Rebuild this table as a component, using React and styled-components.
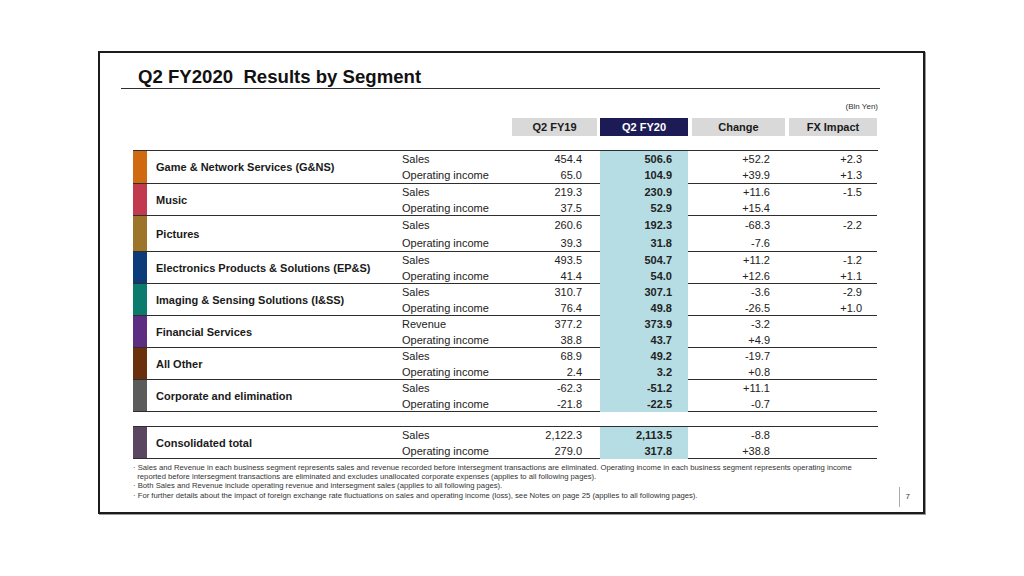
import React from "react";
import styled, { createGlobalStyle } from "styled-components";

const GlobalStyle = createGlobalStyle`
  html, body {
    margin: 0;
    padding: 0;
    background: #fff;
  }
  body {
    font-family: "Liberation Sans", Arial, sans-serif;
    color: #1a1a1a;
  }
`;

const COLS = "14px 255px 110px 88px 88px 97px 92px";
const LINE = "#2e2e2e";
const BLUE = "#b6dde3";

const segments = [
  {
    name: "Game & Network Services (G&NS)",
    color: "#cf6a10",
    rowH: 16.5,
    rows: [
      ["Sales", "454.4", "506.6", "+52.2", "+2.3"],
      ["Operating income", "65.0", "104.9", "+39.9", "+1.3"],
    ],
  },
  {
    name: "Music",
    color: "#c13a4e",
    rowH: 16,
    rows: [
      ["Sales", "219.3", "230.9", "+11.6", "-1.5"],
      ["Operating income", "37.5", "52.9", "+15.4", ""],
    ],
  },
  {
    name: "Pictures",
    color: "#9c742a",
    rowH: 18,
    rows: [
      ["Sales", "260.6", "192.3", "-68.3", "-2.2"],
      ["Operating income", "39.3", "31.8", "-7.6", ""],
    ],
  },
  {
    name: "Electronics Products & Solutions (EP&S)",
    color: "#0b3b78",
    rowH: 16,
    rows: [
      ["Sales", "493.5", "504.7", "+11.2", "-1.2"],
      ["Operating income", "41.4", "54.0", "+12.6", "+1.1"],
    ],
  },
  {
    name: "Imaging & Sensing Solutions (I&SS)",
    color: "#0b7b6d",
    rowH: 16,
    rows: [
      ["Sales", "310.7", "307.1", "-3.6", "-2.9"],
      ["Operating income", "76.4", "49.8", "-26.5", "+1.0"],
    ],
  },
  {
    name: "Financial Services",
    color: "#5d2d83",
    rowH: 16,
    rows: [
      ["Revenue", "377.2", "373.9", "-3.2", ""],
      ["Operating income", "38.8", "43.7", "+4.9", ""],
    ],
  },
  {
    name: "All Other",
    color: "#6a300c",
    rowH: 16,
    rows: [
      ["Sales", "68.9", "49.2", "-19.7", ""],
      ["Operating income", "2.4", "3.2", "+0.8", ""],
    ],
  },
  {
    name: "Corporate and elimination",
    color: "#5b5b5b",
    rowH: 16,
    rows: [
      ["Sales", "-62.3", "-51.2", "+11.1", ""],
      ["Operating income", "-21.8", "-22.5", "-0.7", ""],
    ],
  },
];

const total = {
  name: "Consolidated total",
  color: "#5a4660",
  rowH: 16,
  rows: [
    ["Sales", "2,122.3", "2,113.5", "-8.8", ""],
    ["Operating income", "279.0", "317.8", "+38.8", ""],
  ],
};

const Page = styled.div`
  padding: 51px 0 0 98px;
  height: 576px;
  box-sizing: border-box;
`;

const Frame = styled.div`
  width: 827px;
  height: 463px;
  box-sizing: border-box;
  border: 2px solid #1c1c1c;
  box-shadow: 1px 1px 0 #9a9a9a;
  display: flex;
  flex-direction: column;
`;

const TitleBar = styled.div`
  margin: 13px 0 0 21px;
  width: 759px;
  padding-left: 17px;
  box-sizing: border-box;
  border-bottom: 1.5px solid ${LINE};
  font-size: 18.6px;
  line-height: 22px;
  font-weight: bold;
  color: #111;
  white-space: pre;
`;

const Body = styled.div`
  margin-left: 33px;
  width: 745px;
`;

const Unit = styled.div`
  margin-top: 13px;
  text-align: right;
  font-size: 8px;
  line-height: 10px;
  color: #333;
`;

const HeaderRow = styled.div`
  margin-top: 6px;
  display: grid;
  grid-template-columns: ${COLS};
  height: 18px;
`;

const HeadCell = styled.div`
  grid-column: ${(p) => p.$col};
  margin: ${(p) => p.$margin};
  background: ${(p) => (p.$dark ? "#1d1b55" : "#d9d9d9")};
  color: ${(p) => (p.$dark ? "#fff" : "#1a1a1a")};
  font-size: 11px;
  font-weight: bold;
  display: flex;
  align-items: center;
  justify-content: center;
`;

const TopRule = styled.div`
  margin-top: 14px;
  border-top: 1.5px solid ${LINE};
`;

const Segment = styled.div`
  display: grid;
  grid-template-columns: ${COLS};
  grid-template-rows: repeat(2, ${(p) => p.$rowH}px);
`;

const Bar = styled.div`
  grid-row: 1 / 3;
  grid-column: 1;
  background: ${(p) => p.$color};
  border-bottom: 1.5px solid ${LINE};
`;

const Name = styled.div`
  grid-row: 1 / 3;
  grid-column: 2;
  display: flex;
  align-items: center;
  padding-left: 9px;
  font-size: 11px;
  font-weight: bold;
  color: #1a1a1a;
  border-bottom: 1.5px solid ${LINE};
`;

const Cell = styled.div`
  display: flex;
  align-items: center;
  justify-content: ${(p) => (p.$left ? "flex-start" : "flex-end")};
  padding-right: ${(p) => p.$pr || 0}px;
  font-size: 11px;
  font-weight: ${(p) => (p.$bold ? "bold" : "normal")};
  color: #222;
  white-space: nowrap;
  background: ${(p) => (p.$hl ? BLUE : "transparent")};
  border-bottom: ${(p) =>
    p.$last ? `1.5px solid ${p.$hl ? BLUE : LINE}` : "none"};
`;

const Gap = styled.div`
  height: 14px;
`;

const TotalRule = styled.div`
  border-top: 1.5px solid ${LINE};
`;

const Footer = styled.div`
  margin: 4px 0 0 33px;
  width: 777px;
  display: flex;
  align-items: flex-start;
  justify-content: space-between;
`;

const Notes = styled.div`
  font-size: 7.7px;
  line-height: 9.2px;
  color: #333;
  white-space: nowrap;
`;

const PageNo = styled.div`
  margin-top: 24px;
  height: 20px;
  border-left: 1px solid #aaa;
  padding-left: 6px;
  font-size: 8px;
  line-height: 20px;
  color: #333;
`;

const SegmentBlock = ({ seg }) => (
  <Segment $rowH={seg.rowH}>
    <Bar $color={seg.color} />
    <Name>{seg.name}</Name>
    {seg.rows.map((r, i) => {
      const last = i === seg.rows.length - 1;
      return (
        <React.Fragment key={r[0] + i}>
          <Cell $left $last={last}>{r[0]}</Cell>
          <Cell $pr={18} $last={last}>{r[1]}</Cell>
          <Cell $pr={16} $bold $hl $last={last}>{r[2]}</Cell>
          <Cell $pr={15} $last={last}>{r[3]}</Cell>
          <Cell $pr={15} $last={last}>{r[4]}</Cell>
        </React.Fragment>
      );
    })}
  </Segment>
);

const App = () => (
  <Page>
    <GlobalStyle />
    <Frame>
      <TitleBar>{"Q2 FY2020  Results by Segment"}</TitleBar>
      <Body>
        <Unit>(Bln Yen)</Unit>
        <HeaderRow>
          <HeadCell $col={4} $margin="0 3px 0 0">Q2 FY19</HeadCell>
          <HeadCell $col={5} $margin="0" $dark>Q2 FY20</HeadCell>
          <HeadCell $col={6} $margin="0 0 0 4px">Change</HeadCell>
          <HeadCell $col={7} $margin="0 0 0 4px">FX Impact</HeadCell>
        </HeaderRow>
        <TopRule />
        {segments.map((s) => (
          <SegmentBlock key={s.name} seg={s} />
        ))}
        <Gap />
        <TotalRule />
        <SegmentBlock seg={total} />
      </Body>
      <Footer>
        <Notes>
          <div>
            · Sales and Revenue in each business segment represents sales and revenue recorded before intersegment transactions are eliminated. Operating income in each business segment represents operating income
          </div>
          <div>
            &nbsp;&nbsp;reported before intersegment transactions are eliminated and excludes unallocated corporate expenses (applies to all following pages).
          </div>
          <div>
            · Both Sales and Revenue include operating revenue and intersegment sales (applies to all following pages).
          </div>
          <div>
            · For further details about the impact of foreign exchange rate fluctuations on sales and operating income (loss), see Notes on page 25 (applies to all following pages).
          </div>
        </Notes>
        <PageNo>7</PageNo>
      </Footer>
    </Frame>
  </Page>
);

export default App;
